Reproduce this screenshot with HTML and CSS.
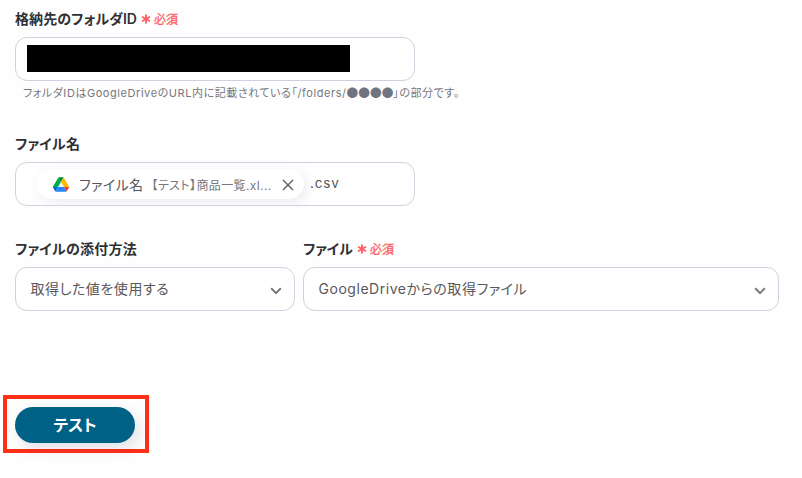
FILE: index.html
```
<!DOCTYPE html>
<html lang="ja">
<head>
    <meta charset="UTF-8">
    <meta name="viewport" content="width=device-width, initial-scale=1.0">
    <title>ファイル設定</title>

    <link rel="stylesheet" href="styles.css">
</head>
<body>

    <form class="form">
        <div class="group">
            <div class="label">
                <span class="label-folder">格納先のフォルダID</span>
                <span class="required"><svg class="star" viewBox="0 0 10 10"><path d="M5 0.4v9.2M1 2.7l8 4.6M9 2.7l-8 4.6"/></svg>必須</span>
            </div>
            <div class="field field-folder">
                <div class="mask"></div>
            </div>
            <p class="help">フォルダIDはGoogleDriveのURL内に記載されている「/folders/<span class="dots">●●●●</span>」の部分です。</p>
        </div>

        <div class="group">
            <div class="label"><span>ファイル名</span></div>
            <div class="field field-name">
                <div class="chip">
                    <svg class="drive" viewBox="0 0 87.3 78">
                        <path d="m6.6 66.85 3.85 6.65c.8 1.4 1.95 2.5 3.3 3.3l13.75-23.8h-27.5c0 1.55.4 3.1 1.2 4.5z" fill="#0066da"/>
                        <path d="m43.65 25-13.75-23.8c-1.35.8-2.5 1.9-3.3 3.3l-25.4 44a9.06 9.06 0 0 0 -1.2 4.5h27.5z" fill="#00ac47"/>
                        <path d="m73.55 76.8c1.35-.8 2.5-1.9 3.3-3.3l1.6-2.75 7.65-13.25c.8-1.4 1.2-2.95 1.2-4.5h-27.5l5.85 11.5z" fill="#ea4335"/>
                        <path d="m43.65 25 13.75-23.8c-1.35-.8-2.9-1.2-4.5-1.2h-18.5c-1.6 0-3.15.45-4.5 1.2z" fill="#00832d"/>
                        <path d="m59.8 53h-32.3l-13.75 23.8c1.35.8 2.9 1.2 4.5 1.2h50.8c1.6 0 3.15-.45 4.5-1.2z" fill="#2684fc"/>
                        <path d="m73.4 26.5-12.7-22c-.8-1.4-1.95-2.5-3.3-3.3l-13.75 23.8 16.15 28h27.45c0-1.55-.4-3.1-1.2-4.5z" fill="#ffba00"/>
                    </svg>
                    <span class="chip-name">ファイル名</span>
                    <span class="chip-value">【テスト】商品一覧.xl...</span>
                    <svg class="close" viewBox="0 0 12 12"><path d="M1 1l10 10M11 1L1 11"/></svg>
                </div>
                <span class="ext">.csv</span>
            </div>
        </div>

        <div class="row">
            <div class="group group-method">
                <div class="label"><span>ファイルの添付方法</span></div>
                <div class="field select">
                    <span class="value">取得した値を使用する</span>
                    <svg class="arrow" viewBox="0 0 12 8"><path d="M1.2 1.3L6 6.1l4.8-4.8"/></svg>
                </div>
            </div>
            <div class="group group-file">
                <div class="label">
                    <span class="label-file">ファイル</span>
                    <span class="required"><svg class="star" viewBox="0 0 10 10"><path d="M5 0.4v9.2M1 2.7l8 4.6M9 2.7l-8 4.6"/></svg>必須</span>
                </div>
                <div class="field select">
                    <span class="value">GoogleDriveからの取得ファイル</span>
                    <svg class="arrow" viewBox="0 0 12 8"><path d="M1.2 1.3L6 6.1l4.8-4.8"/></svg>
                </div>
            </div>
        </div>

        <div class="highlight">
            <button type="button" class="test-button">テスト</button>
        </div>
    </form>

</body>
</html>
```

FILE: styles.css
```
* {
    box-sizing: border-box;
}

body {
    margin: 0;
    background-color: #fefefe;
    color: #303033;
    font-family: Inter, "Noto Sans CJK JP", sans-serif;
    font-feature-settings: "palt";
    overflow: hidden;
}

.form {
    width: 802px;
    height: 478px;
    padding: 7px 23px 0 15px;
}

.group {
    margin-bottom: 31px;
}

.label {
    display: flex;
    align-items: center;
    gap: 4px;
    height: 22px;
    margin-bottom: 8px;
    font-size: 14px;
    font-weight: 600;
    letter-spacing: 0.25px;
    white-space: nowrap;
}

.label-folder {
    letter-spacing: 0.1px;
}

.label-file {
    letter-spacing: 0;
}

.required {
    display: flex;
    align-items: center;
    gap: 3px;
    color: #ff5f66;
    font-size: 12px;
    font-weight: 400;
    letter-spacing: 0;
    -webkit-text-stroke: 0.3px #ff5f66;
}

.star {
    width: 10px;
    height: 10px;
    margin-top: 2px;
    fill: none;
    stroke: #ff5f66;
    stroke-width: 1.9;
}

.field {
    display: flex;
    align-items: center;
    height: 44px;
    border: 1px solid #cfd1de;
    border-radius: 12px;
    background-color: #fff;
    color: #58585c;
    font-size: 14px;
    white-space: nowrap;
}

.field-folder {
    width: 400px;
    padding-left: 11px;
}

.mask {
    width: 323px;
    height: 27px;
    margin-bottom: 1px;
    background-color: #000;
}

.help {
    height: 16px;
    margin: 4px 0 0;
    padding-left: 8px;
    color: #77777c;
    font-size: 11px;
    line-height: 17px;
    letter-spacing: 0.56px;
    white-space: nowrap;
}

.dots {
    color: #6f7480;
    font-family: "Noto Sans CJK JP", sans-serif;
    font-feature-settings: normal;
    font-size: 11.7px;
    letter-spacing: 0;
    line-height: 1;
}

.field-name {
    width: 400px;
    padding-left: 20px;
    overflow: hidden;
}

.chip {
    display: flex;
    align-items: center;
    width: 268px;
    height: 30px;
    padding: 0 10px 0 17px;
    border-radius: 15px;
    background-color: #fff;
    box-shadow: 3px 3px 12px rgba(70, 50, 90, 0.1);
}

.drive {
    width: 16px;
    height: 15px;
    margin-right: 10px;
}

.chip-name {
    margin-right: 8px;
    letter-spacing: 0.4px;
}

.chip-value {
    color: #77777c;
    font-size: 12px;
    letter-spacing: 0.4px;
}

.close {
    width: 12px;
    height: 12px;
    margin-left: auto;
    margin-top: 1px;
    fill: none;
    stroke: #66666a;
    stroke-width: 1.5;
}

.ext {
    margin: 0 0 2px 6px;
    font-size: 13.5px;
    letter-spacing: 0.8px;
}

.row {
    display: flex;
    gap: 8px;
}

.row .group {
    margin-bottom: 0;
}

.group-method {
    width: 280px;
}

.group-file {
    width: 476px;
}

.select {
    justify-content: space-between;
    padding: 0 12px 0 14.5px;
}

.value {
    margin-bottom: 2px;
    letter-spacing: 0.54px;
}

.arrow {
    width: 12px;
    height: 8px;
    margin-top: 4px;
    fill: none;
    stroke: #77777b;
    stroke-width: 2;
}

/* frame around the test button */
.highlight {
    width: 146px;
    height: 58px;
    margin: 84px 0 0 -12px;
    padding: 8px 10px 6px 8px;
    border: 4px solid #ff2f1a;
}

.test-button {
    display: block;
    width: 120px;
    height: 36px;
    padding: 0 0 2px;
    border: none;
    border-radius: 18px;
    background-color: #006187;
    box-shadow: 4px 6px 14px rgba(60, 60, 100, 0.15);
    color: #fff;
    font-family: inherit;
    font-feature-settings: inherit;
    font-size: 16px;
    font-weight: 700;
    cursor: pointer;
}
```
